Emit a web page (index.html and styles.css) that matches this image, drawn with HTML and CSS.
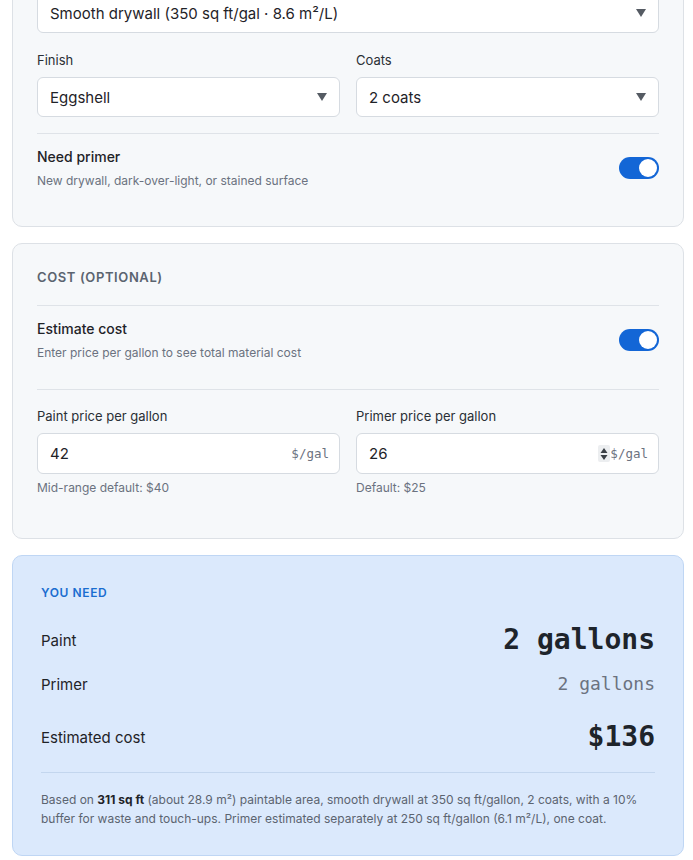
FILE: index.html
```html
<!DOCTYPE html>
<html lang="en">
<head>
<meta charset="utf-8">
<title>Paint calculator</title>
<link rel="stylesheet" href="styles.css">
</head>
<body>
<div class="page">
  <section class="card">
    <div class="field">
      <label class="label">Surface type</label>
      <div class="select-wrap">
        <select class="select"><option>Smooth drywall (350 sq ft/gal · 8.6 m²/L)</option></select>
        <svg class="caret" width="12" height="10" viewBox="0 0 12 10"><path d="M1 1h10L6 9z" fill="#555b63"/></svg>
      </div>
    </div>
    <div class="grid2 gap-top">
      <div class="field">
        <label class="label">Finish</label>
        <div class="select-wrap">
          <select class="select"><option>Eggshell</option></select>
          <svg class="caret" width="12" height="10" viewBox="0 0 12 10"><path d="M1 1h10L6 9z" fill="#555b63"/></svg>
        </div>
      </div>
      <div class="field">
        <label class="label">Coats</label>
        <div class="select-wrap">
          <select class="select"><option>2 coats</option></select>
          <svg class="caret" width="12" height="10" viewBox="0 0 12 10"><path d="M1 1h10L6 9z" fill="#555b63"/></svg>
        </div>
      </div>
    </div>
    <hr class="divider">
    <div class="toggle-row last">
      <div>
        <div class="toggle-title">Need primer</div>
        <div class="toggle-sub">New drywall, dark-over-light, or stained surface</div>
      </div>
      <span class="switch"><span class="knob"></span></span>
    </div>
  </section>

  <section class="card">
    <h2 class="section-title">Cost (optional)</h2>
    <hr class="divider flush">
    <div class="toggle-row mid">
      <div>
        <div class="toggle-title">Estimate cost</div>
        <div class="toggle-sub">Enter price per gallon to see total material cost</div>
      </div>
      <span class="switch"><span class="knob"></span></span>
    </div>
    <hr class="divider">
    <div class="grid2 prices">
      <div class="field">
        <label class="label">Paint price per gallon</label>
        <div class="input-wrap">
          <input class="input" type="text" value="42">
          <span class="suffix">$/gal</span>
        </div>
        <div class="hint">Mid-range default: $40</div>
      </div>
      <div class="field">
        <label class="label">Primer price per gallon</label>
        <div class="input-wrap">
          <input class="input" type="text" value="26">
          <span class="suffix"><span class="spinner"><svg width="8" height="14" viewBox="0 0 8 14"><path d="M4 1L7.5 6h-7z M4 13L0.5 8h7z" fill="#3a3f45"/></svg></span>$/gal</span>
        </div>
        <div class="hint">Default: $25</div>
      </div>
    </div>
  </section>

  <section class="card result">
    <div class="result-title">You need</div>
    <div class="result-row first">
      <span class="result-label">Paint</span>
      <span class="value big">2 gallons</span>
    </div>
    <div class="result-row">
      <span class="result-label">Primer</span>
      <span class="value small">2 gallons</span>
    </div>
    <div class="result-row cost">
      <span class="result-label">Estimated cost</span>
      <span class="value big">$136</span>
    </div>
    <hr class="result-divider">
    <p class="note">Based on <strong>311 sq ft</strong> (about 28.9 m²) paintable area, smooth drywall at 350 sq ft/gallon, 2 coats, with a 10% buffer for waste and touch-ups. Primer estimated separately at 250 sq ft/gallon (6.1 m²/L), one coat.</p>
  </section>
</div>
</body>
</html>
```

FILE: styles.css
```css
* { box-sizing: border-box; }
html, body { margin: 0; padding: 0; background: #ffffff; }
body {
  font-family: Inter, "Noto Sans", sans-serif;
  color: #1f2328;
  overflow: hidden;
}
.page {
  margin-top: -58px;
  padding: 0 9px 0 12px;
  display: flex;
  flex-direction: column;
  gap: 16px;
}
.card {
  background: #f6f8fa;
  border: 1px solid #dde1e6;
  border-radius: 10px;
  padding: 24px;
}
.field { display: flex; flex-direction: column; }
.label {
  font-size: 13px;
  line-height: 18px;
  color: #2a2f35;
  margin-bottom: 8px;
}
.grid2 {
  display: grid;
  grid-template-columns: 1fr 1fr;
  gap: 16px;
}
.gap-top { margin-top: 18px; }
.select-wrap, .input-wrap { position: relative; }
.select {
  appearance: none;
  -webkit-appearance: none;
  width: 100%;
  height: 40px;
  border: 1px solid #d6dbe1;
  border-radius: 6px;
  background: #ffffff;
  font-family: Inter, "Noto Sans", sans-serif;
  font-size: 15px;
  color: #1f2328;
  padding: 0 12px;
}
.caret {
  position: absolute;
  right: 12px;
  top: 15px;
  pointer-events: none;
}
.divider {
  border: 0;
  border-top: 1px solid #dfe3e8;
  margin: 16px 0 0;
}
.divider.flush { margin-top: 19px; }
.toggle-row {
  display: flex;
  align-items: center;
  justify-content: space-between;
  padding: 13px 0 14px;
}
.toggle-row.last { padding-bottom: 13px; }
.toggle-row.mid { padding-bottom: 12px; }
.toggle-title {
  font-size: 14px;
  line-height: 20px;
  font-weight: 500;
  color: #1f2328;
}
.toggle-sub {
  font-size: 12px;
  line-height: 16px;
  color: #6b7280;
  margin-top: 6px;
}
.switch {
  width: 40px;
  height: 22px;
  border-radius: 11px;
  background: #1366d6;
  display: flex;
  align-items: center;
  justify-content: flex-end;
  padding: 2px;
}
.knob {
  width: 18px;
  height: 18px;
  border-radius: 50%;
  background: #ffffff;
}
.section-title {
  margin: 0;
  font-size: 13px;
  line-height: 18px;
  font-weight: 600;
  letter-spacing: 0.6px;
  text-transform: uppercase;
  color: #5b6470;
}
.prices { margin-top: 17px; padding-bottom: 18px; }
.input {
  width: 100%;
  height: 41px;
  border: 1px solid #d6dbe1;
  border-radius: 6px;
  background: #ffffff;
  font-family: Inter, "Noto Sans", sans-serif;
  font-size: 15px;
  color: #1f2328;
  padding: 0 60px 0 12px;
  outline: none;
}
.suffix {
  position: absolute;
  right: 11px;
  top: 0;
  height: 41px;
  display: flex;
  align-items: center;
  font-family: "DejaVu Sans Mono", "Liberation Mono", monospace;
  font-size: 12.5px;
  color: #6b7280;
}
.spinner {
  display: flex;
  align-items: center;
  justify-content: center;
  width: 12px;
  height: 17px;
  background: #eceef0;
  border-radius: 2px;
}
.hint {
  font-size: 12px;
  line-height: 16px;
  color: #6b7280;
  margin-top: 6px;
}
.result {
  background: #dbe9fc;
  border-color: #bfd6f4;
  padding: 29px 28px 27px 28px;
}
.result-title {
  font-size: 12px;
  line-height: 16px;
  font-weight: 600;
  letter-spacing: 0.6px;
  text-transform: uppercase;
  color: #1a6dd0;
  margin-bottom: 14px;
}
.result-row {
  display: flex;
  align-items: center;
  justify-content: space-between;
  padding: 8px 0;
}
.result-row.first { padding-bottom: 7px; }
.result-row.cost { margin-top: 8px; }
.result-label {
  font-size: 15px;
  color: #1f2328;
}
.value { font-family: "DejaVu Sans Mono", "Liberation Mono", monospace; }
.value.big {
  font-size: 28px;
  line-height: 34px;
  font-weight: 700;
  color: #1e242b;
}
.value.small {
  font-size: 18px;
  line-height: 24px;
  color: #6b7280;
}
.result-divider {
  border: 0;
  border-top: 1px solid #c3d6ee;
  margin: 10px 0 0;
}
.note {
  margin: 17px 0 0;
  font-size: 12px;
  line-height: 19px;
  color: #5b6470;
}
.note strong { color: #1f2328; font-weight: 700; }
```
